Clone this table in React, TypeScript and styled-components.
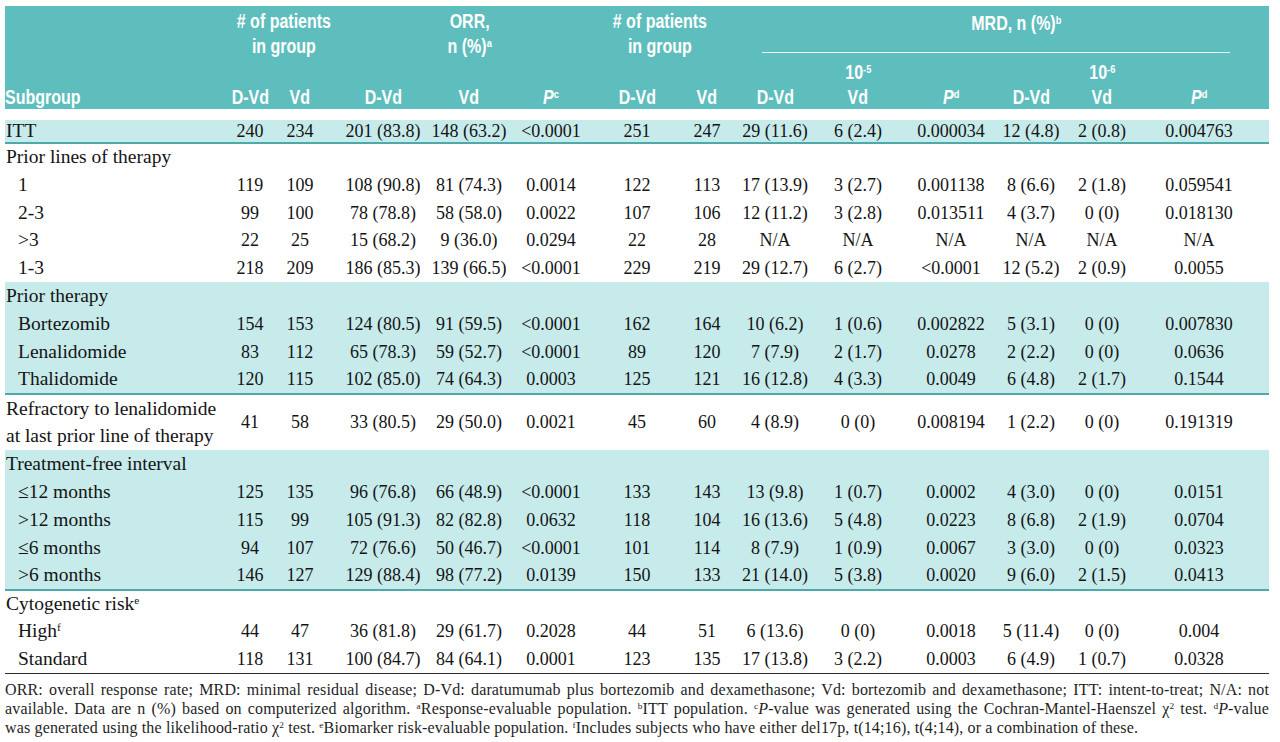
import React from 'react';
import styled, { createGlobalStyle } from 'styled-components';

const GlobalStyle = createGlobalStyle`
  body {
    margin: 0;
    background: #fff;
  }
`;

// column widths + padding that puts each column's centre where the print has it
const COLS = [
  { w: 220 },
  { w: 50 },
  { w: 50 },
  { w: 101, pl: 15 },
  { w: 86 },
  { w: 78 },
  { w: 94 },
  { w: 46 },
  { w: 90 },
  { w: 76 },
  { w: 94, pl: 16 },
  { w: 82 },
  { w: 60 },
  { w: 137, pr: 3 },
];

const TEAL = '#5ebdbd';
const BAND = '#c7ebeb';
const RULE = '#4eaaaa';
const HEAD_FONT = '"Liberation Sans", Arial, sans-serif';
const ROW_H = 27.85;

const Page = styled.div`
  padding: 6px 11px 0 5px;
`;

const Table = styled.table`
  width: 1264px;
  table-layout: fixed;
  border-collapse: collapse;
  border-spacing: 0;
  color: #141414;
`;

const HeadRow = styled.tr<{ $h: number }>`
  height: ${(p) => p.$h}px;
  background: ${TEAL};
`;

const HeadCell = styled.th<{ $c?: number; $left?: boolean }>`
  padding: 0 ${(p) => COLS[p.$c ?? 0].pr ?? 0}px 0 ${(p) => COLS[p.$c ?? 0].pl ?? 0}px;
  font-family: ${HEAD_FONT};
  font-weight: 700;
  font-size: 20px;
  line-height: 24px;
  color: #fff;
  text-align: ${(p) => (p.$left ? 'left' : 'center')};
  vertical-align: middle;
  white-space: nowrap;
`;

const SpanHead = styled.th<{ $pl?: number; $pr?: number }>`
  padding: 3px ${(p) => p.$pr ?? 0}px 0 ${(p) => p.$pl ?? 0}px;
  font-family: ${HEAD_FONT};
  font-weight: 700;
  font-size: 20px;
  line-height: 25px;
  color: #fff;
  text-align: center;
  vertical-align: top;
  white-space: nowrap;
`;

const MrdHead = styled.th`
  padding: 5px 0 0;
  vertical-align: top;
  font-family: ${HEAD_FONT};
  font-weight: 700;
  font-size: 20px;
  line-height: 25px;
  color: #fff;
`;

const MrdTitle = styled.div`
  padding-left: 33px;
  text-align: center;
`;

const MrdRule = styled.div`
  margin: 16px 39px 0 32px;
  border-bottom: 1px solid #f2fbfb;
`;

// the print uses a condensed bold face; squeeze the sans to match
const Narrow = styled.span<{ $origin?: string }>`
  display: inline-block;
  transform: scaleX(0.8);
  transform-origin: ${(p) => p.$origin ?? 'center'};
`;

const Sup = styled.sup`
  font-size: 58%;
  line-height: 0;
  vertical-align: 0.55em;
`;

const Ital = styled.i`
  font-style: italic;
`;

const Spacer = styled.tr`
  height: 11px;
`;

const Row = styled.tr<{ $band?: boolean; $rule?: 'teal' | 'dark'; $h: number }>`
  height: ${(p) => p.$h}px;
  background: ${(p) => (p.$band ? BAND : '#fff')};
  & > td {
    border-bottom: ${(p) =>
      p.$rule === 'teal' ? `2px solid ${RULE}` : p.$rule === 'dark' ? '1.5px solid #2b2b2b' : 'none'};
  }
`;

const Label = styled.td<{ $sub?: boolean; $lh: number }>`
  padding: 0 0 0 ${(p) => (p.$sub ? 13 : 1)}px;
  font-family: "Liberation Serif", "Times New Roman", serif;
  font-size: 19.5px;
  line-height: ${(p) => p.$lh}px;
  text-align: left;
  white-space: nowrap;
`;

const Num = styled.td<{ $c: number }>`
  padding: 0 ${(p) => COLS[p.$c].pr ?? 0}px 0 ${(p) => COLS[p.$c].pl ?? 0}px;
  font-family: "Liberation Serif", "Times New Roman", serif;
  font-size: 18px;
  line-height: 20px;
  text-align: center;
  vertical-align: middle;
  white-space: nowrap;
`;

const Foot = styled.div`
  width: 1264px;
  margin-top: 6px;
  font-family: "Liberation Serif", "Times New Roman", serif;
  font-size: 16px;
  letter-spacing: 0.15px;
  line-height: 19px;
  color: #1e1e1e;
`;

const FootLine = styled.div<{ $last?: boolean }>`
  text-align: ${(p) => (p.$last ? 'left' : 'justify')};
  text-align-last: ${(p) => (p.$last ? 'left' : 'justify')};
`;

type Line = { label: React.ReactNode; sub?: boolean; tall?: boolean; short?: boolean; cells?: string[] };
type Group = { band?: boolean; rule?: 'teal' | 'dark'; rows: Line[] };

const GROUPS: Group[] = [
  {
    band: true,
    rule: 'teal',
    rows: [
      { label: 'ITT', short: true, cells: ['240', '234', '201 (83.8)', '148 (63.2)', '<0.0001', '251', '247', '29 (11.6)', '6 (2.4)', '0.000034', '12 (4.8)', '2 (0.8)', '0.004763'] },
    ],
  },
  {
    rows: [
      { label: 'Prior lines of therapy' },
      { label: '1', sub: true, cells: ['119', '109', '108 (90.8)', '81 (74.3)', '0.0014', '122', '113', '17 (13.9)', '3 (2.7)', '0.001138', '8 (6.6)', '2 (1.8)', '0.059541'] },
      { label: '2-3', sub: true, cells: ['99', '100', '78 (78.8)', '58 (58.0)', '0.0022', '107', '106', '12 (11.2)', '3 (2.8)', '0.013511', '4 (3.7)', '0 (0)', '0.018130'] },
      { label: '>3', sub: true, cells: ['22', '25', '15 (68.2)', '9 (36.0)', '0.0294', '22', '28', 'N/A', 'N/A', 'N/A', 'N/A', 'N/A', 'N/A'] },
      { label: '1-3', sub: true, cells: ['218', '209', '186 (85.3)', '139 (66.5)', '<0.0001', '229', '219', '29 (12.7)', '6 (2.7)', '<0.0001', '12 (5.2)', '2 (0.9)', '0.0055'] },
    ],
  },
  {
    band: true,
    rule: 'teal',
    rows: [
      { label: 'Prior therapy' },
      { label: 'Bortezomib', sub: true, cells: ['154', '153', '124 (80.5)', '91 (59.5)', '<0.0001', '162', '164', '10 (6.2)', '1 (0.6)', '0.002822', '5 (3.1)', '0 (0)', '0.007830'] },
      { label: 'Lenalidomide', sub: true, cells: ['83', '112', '65 (78.3)', '59 (52.7)', '<0.0001', '89', '120', '7 (7.9)', '2 (1.7)', '0.0278', '2 (2.2)', '0 (0)', '0.0636'] },
      { label: 'Thalidomide', sub: true, cells: ['120', '115', '102 (85.0)', '74 (64.3)', '0.0003', '125', '121', '16 (12.8)', '4 (3.3)', '0.0049', '6 (4.8)', '2 (1.7)', '0.1544'] },
    ],
  },
  {
    rows: [
      {
        label: (
          <>
            Refractory to lenalidomide
            <br />
            at last prior line of therapy
          </>
        ),
        tall: true,
        cells: ['41', '58', '33 (80.5)', '29 (50.0)', '0.0021', '45', '60', '4 (8.9)', '0 (0)', '0.008194', '1 (2.2)', '0 (0)', '0.191319'],
      },
    ],
  },
  {
    band: true,
    rule: 'teal',
    rows: [
      { label: 'Treatment-free interval' },
      { label: '≤12 months', sub: true, cells: ['125', '135', '96 (76.8)', '66 (48.9)', '<0.0001', '133', '143', '13 (9.8)', '1 (0.7)', '0.0002', '4 (3.0)', '0 (0)', '0.0151'] },
      { label: '>12 months', sub: true, cells: ['115', '99', '105 (91.3)', '82 (82.8)', '0.0632', '118', '104', '16 (13.6)', '5 (4.8)', '0.0223', '8 (6.8)', '2 (1.9)', '0.0704'] },
      { label: '≤6 months', sub: true, cells: ['94', '107', '72 (76.6)', '50 (46.7)', '<0.0001', '101', '114', '8 (7.9)', '1 (0.9)', '0.0067', '3 (3.0)', '0 (0)', '0.0323'] },
      { label: '>6 months', sub: true, cells: ['146', '127', '129 (88.4)', '98 (77.2)', '0.0139', '150', '133', '21 (14.0)', '5 (3.8)', '0.0020', '9 (6.0)', '2 (1.5)', '0.0413'] },
    ],
  },
  {
    rule: 'dark',
    rows: [
      { label: <>Cytogenetic risk<Sup>e</Sup></> },
      { label: <>High<Sup>f</Sup></>, sub: true, cells: ['44', '47', '36 (81.8)', '29 (61.7)', '0.2028', '44', '51', '6 (13.6)', '0 (0)', '0.0018', '5 (11.4)', '0 (0)', '0.004'] },
      { label: 'Standard', sub: true, cells: ['118', '131', '100 (84.7)', '84 (64.1)', '0.0001', '123', '135', '17 (13.8)', '3 (2.2)', '0.0003', '6 (4.9)', '1 (0.7)', '0.0328'] },
    ],
  },
];

const SUBHEADS: React.ReactNode[] = [
  'D-Vd',
  'Vd',
  'D-Vd',
  'Vd',
  <><Ital>P</Ital><Sup>c</Sup></>,
  'D-Vd',
  'Vd',
  'D-Vd',
  'Vd',
  <><Ital>P</Ital><Sup>d</Sup></>,
  'D-Vd',
  'Vd',
  <><Ital>P</Ital><Sup>d</Sup></>,
];

const Header = () => (
  <thead>
    <HeadRow $h={54}>
      <HeadCell />
      <SpanHead colSpan={2} $pr={12}>
        <Narrow>
          # of patients
          <br />
          in group
        </Narrow>
      </SpanHead>
      <SpanHead colSpan={3} $pl={25}>
        <Narrow>
          ORR,
          <br />n (%)<Sup>a</Sup>
        </Narrow>
      </SpanHead>
      <SpanHead colSpan={2}>
        <Narrow>
          # of patients
          <br />
          in group
        </Narrow>
      </SpanHead>
      <MrdHead colSpan={6}>
        <MrdTitle>
          <Narrow>
            MRD, n (%)<Sup>b</Sup>
          </Narrow>
        </MrdTitle>
        <MrdRule />
      </MrdHead>
    </HeadRow>
    <HeadRow $h={23}>
      {COLS.map((_, i) => (
        <HeadCell key={i} $c={i}>
          {i === 9 ? <Narrow>10<Sup>-5</Sup></Narrow> : i === 12 ? <Narrow>10<Sup>-6</Sup></Narrow> : null}
        </HeadCell>
      ))}
    </HeadRow>
    <HeadRow $h={25}>
      <HeadCell $left>
        <Narrow $origin="left">Subgroup</Narrow>
      </HeadCell>
      {SUBHEADS.map((h, i) => (
        <HeadCell key={i} $c={i + 1}>
          <Narrow>{h}</Narrow>
        </HeadCell>
      ))}
    </HeadRow>
  </thead>
);

export default function App() {
  return (
    <Page>
      <GlobalStyle />
      <Table>
        <colgroup>
          {COLS.map((c, i) => (
            <col key={i} style={{ width: c.w }} />
          ))}
        </colgroup>
        <Header />
        <tbody>
          <Spacer>
            <td colSpan={14} />
          </Spacer>
          {GROUPS.map((g, gi) =>
            g.rows.map((r, ri) => (
              <Row
                key={`${gi}-${ri}`}
                $band={g.band}
                $h={r.tall ? ROW_H * 2 : r.short ? 22 : ROW_H}
                $rule={ri === g.rows.length - 1 ? g.rule : undefined}
              >
                <Label $sub={r.sub} $lh={r.tall ? ROW_H : 22}>
                  {r.label}
                </Label>
                {Array.from({ length: 13 }).map((_, ci) => (
                  <Num key={ci} $c={ci + 1}>
                    {r.cells ? r.cells[ci] : ''}
                  </Num>
                ))}
              </Row>
            ))
          )}
        </tbody>
      </Table>
      <Foot>
        <FootLine>
          ORR: overall response rate; MRD: minimal residual disease; D-Vd: daratumumab plus bortezomib and
          dexamethasone; Vd: bortezomib and dexamethasone; ITT: intent-to-treat; N/A: not
        </FootLine>
        <FootLine>
          available. Data are n (%) based on computerized algorithm. <Sup>a</Sup>Response-evaluable population.{' '}
          <Sup>b</Sup>ITT population. <Sup>c</Sup>
          <Ital>P</Ital>-value was generated using the Cochran-Mantel-Haenszel χ<Sup>2</Sup> test. <Sup>d</Sup>
          <Ital>P</Ital>-value
        </FootLine>
        <FootLine $last>
          was generated using the likelihood-ratio χ<Sup>2</Sup> test. <Sup>e</Sup>Biomarker risk-evaluable
          population. <Sup>f</Sup>Includes subjects who have either del17p, t(14;16), t(4;14), or a combination of
          these.
        </FootLine>
      </Foot>
    </Page>
  );
}
